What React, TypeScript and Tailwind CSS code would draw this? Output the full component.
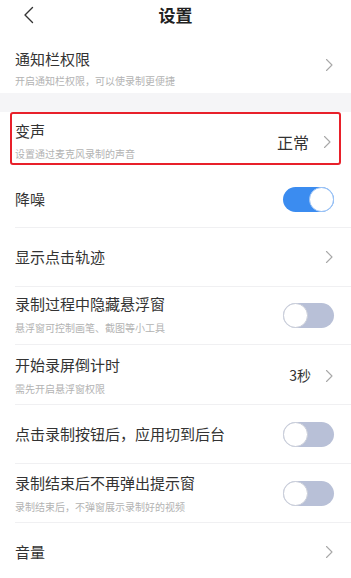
import { ReactNode } from 'react'

function Chevron() {
  return (
    <svg width="9" height="14" viewBox="0 0 9 14" fill="none" className="shrink-0">
      <path d="M1.5 1.5L7 7L1.5 12.5" stroke="#a8a8a8" strokeWidth="1.1" strokeLinecap="round" strokeLinejoin="round" />
    </svg>
  )
}

function Toggle({ on }: { on: boolean }) {
  return (
    <div
      className={`relative w-[51px] h-[25px] rounded-full shrink-0 ${on ? 'bg-[#3b8cf0]' : 'bg-[#b8c0d7]'}`}
    >
      <div
        className={`absolute top-0 w-[25px] h-[25px] rounded-full bg-white border ${
          on ? 'right-0 border-[#9cc3f5]' : 'left-0 border-[#c9cdd8]'
        }`}
      />
    </div>
  )
}

interface RowProps {
  title: string
  sub?: string
  right?: ReactNode
  divider?: boolean
  height: number
  pt?: string
}

function Row({ title, sub, right, divider = true, height, pt }: RowProps) {
  return (
    <div className="pl-[15px]">
      <div
        className={`flex justify-between pr-[17px] ${sub ? '' : 'items-center'} ${pt ?? ''}`}
        style={{ height }}
      >
        {sub ? (
          <div className="flex flex-col">
            <span className="text-[15px] leading-[20px] text-[#333333]">{title}</span>
            <span className="mt-[7px] text-[10px] leading-[14px] text-[#b3b3b3]">{sub}</span>
          </div>
        ) : (
          <span className="text-[15px] leading-[20px] text-[#333333]">{title}</span>
        )}
        <div className={`flex items-center gap-[14px] ${sub ? 'self-center -mt-[8px]' : ''}`}>{right}</div>
      </div>
      {divider && <div className="h-px bg-[#f0f0f2]" />}
    </div>
  )
}

export default function App() {
  return (
    <div
      className="w-[351px] h-[578px] overflow-hidden bg-white"
      style={{ fontFamily: '"Noto Sans CJK SC", "Noto Sans", sans-serif' }}
    >
      {/* header */}
      <div className="relative h-[30px] flex items-center justify-center">
        <svg width="12" height="18" viewBox="0 0 12 18" fill="none" className="absolute left-[23px] top-[6px]">
          <path d="M9.5 1.5L2 9L9.5 16.5" stroke="#333" strokeWidth="1.4" strokeLinecap="round" strokeLinejoin="round" />
        </svg>
        <span className="text-[17px] font-bold text-[#222222]">设置</span>
      </div>

      {/* notification permission */}
      <div className="flex justify-between pl-[15px] pr-[17px] pt-[19px] h-[63px]">
        <div className="flex flex-col">
          <span className="text-[15px] leading-[20px] text-[#333333]">通知栏权限</span>
          <span className="mt-[5px] text-[10px] leading-[14px] text-[#b3b3b3]">开启通知栏权限，可以使录制更便捷</span>
        </div>
        <div className="self-center -mt-[12px]">
          <Chevron />
        </div>
      </div>

      <div className="h-[19px] bg-[#f5f5f7]" />

      {/* voice change (highlighted) */}
      <div className="mx-[10px] h-[53px] border-2 border-[#e8202a] rounded-[3px] flex justify-between pl-[3px] pr-[7px] pt-[7px]">
        <div className="flex flex-col">
          <span className="text-[15px] leading-[20px] text-[#333333]">变声</span>
          <span className="mt-[6px] text-[10px] leading-[14px] text-[#b3b3b3]">设置通过麦克风录制的声音</span>
        </div>
        <div className="flex items-center gap-[14px] self-center">
          <span className="text-[16px] text-[#333333]">正常</span>
          <Chevron />
        </div>
      </div>

      <Row title="降噪" right={<Toggle on />} height={62} pt="pt-[6px]" />
      <Row title="显示点击轨迹" right={<Chevron />} height={58} />
      <Row
        title="录制过程中隐藏悬浮窗"
        sub="悬浮窗可控制画笔、截图等小工具"
        right={<Toggle on={false} />}
        height={57}
        pt="pt-[7px]"
      />
      <Row
        title="开始录屏倒计时"
        sub="需先开启悬浮窗权限"
        right={
          <>
            <span className="text-[14px] text-[#333333]">3秒</span>
            <Chevron />
          </>
        }
        height={59}
        pt="pt-[10px]"
      />
      <Row title="点击录制按钮后，应用切到后台" right={<Toggle on={false} />} height={58} />
      <Row
        title="录制结束后不再弹出提示窗"
        sub="录制结束后，不弹窗展示录制好的视频"
        right={<Toggle on={false} />}
        height={58}
        pt="pt-[9px]"
      />
      <Row title="音量" right={<Chevron />} height={58} divider={false} />
    </div>
  )
}
